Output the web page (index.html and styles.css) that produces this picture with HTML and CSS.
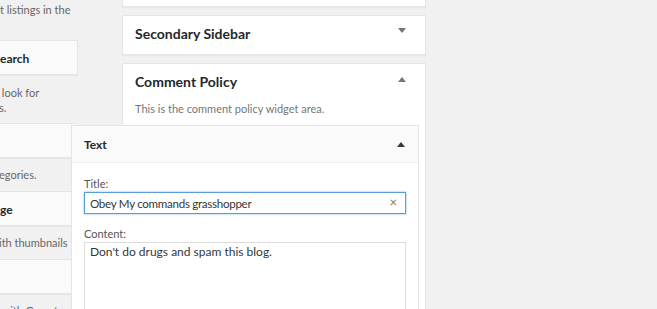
FILE: index.html
```html
<!DOCTYPE html>
<html lang="en">
<head>
  <meta charset="UTF-8">
  <meta name="viewport" content="width=device-width, initial-scale=1.0">
  <title>Widgets</title>
  <link rel="stylesheet" href="styles.css">
</head>
<body>

  <div class="screen">

    <!-- available widgets (scrolled, only the right edge shows) -->
    <div class="available">
      <div class="desc first">t listings in the</div>
      <div class="item"><span>earch</span></div>
      <div class="desc two">&nbsp;look for<br>s.</div>
      <div class="item"></div>
      <div class="desc">egories.</div>
      <div class="item"><span>ge</span></div>
      <div class="desc">ith thumbnails</div>
      <div class="item"></div>
      <div class="desc">&nbsp;with Gravatar</div>
    </div>

    <!-- sidebars -->
    <div class="sidebars">
      <div class="area above"></div>
      <div class="area">
        <div class="area-head">
          <h2>Secondary Sidebar</h2>
          <span class="arrow down"></span>
        </div>
      </div>
      <div class="area open">
        <div class="area-head">
          <h2>Comment Policy</h2>
          <span class="arrow up"></span>
        </div>
        <p class="area-desc">This is the comment policy widget area.</p>
      </div>
    </div>

    <!-- the widget being dragged -->
    <div class="widget">
      <div class="widget-top">
        <h3>Text</h3>
        <span class="arrow up dark"></span>
      </div>
      <div class="widget-inside">
        <label class="field-label" for="title">Title:</label>
        <div class="input-wrap">
          <input type="text" id="title" value="Obey My commands grasshopper">
          <span class="clear">&times;</span>
        </div>
        <label class="field-label" for="content">Content:</label>
        <textarea id="content">Don't do drugs and spam this blog.</textarea>
      </div>
    </div>

  </div>

</body>
</html>
```

FILE: styles.css
```css
html, body {
  margin: 0;
  height: 100%;
}
body {
  background: #f1f1f1;
  font-family: Lato, "Liberation Sans", sans-serif;
  color: #444;
  overflow: hidden;
}
.screen {
  position: relative;
  display: flex;
  align-items: flex-start;
  height: 100%;
}

/* left column */
.available {
  width: 79px;
  margin-left: -1px;
  flex-shrink: 0;
}
.desc {
  padding: 9px 0;
  font-size: 11px;
  line-height: 15px;
  color: #666;
  white-space: nowrap;
  overflow: hidden;
}
.desc.first {
  height: 40px;
  padding: 2px 0 0 1px;
  box-sizing: border-box;
}
.desc.two {
  height: 48px;
  padding-top: 10px;
  box-sizing: border-box;
}
.item {
  height: 35px;
  box-sizing: border-box;
  background: #fafafa;
  border: 1px solid #e5e5e5;
  box-shadow: 0 1px 1px rgba(0,0,0,0.04);
  display: flex;
  align-items: center;
  padding-top: 2px;
  font-size: 12px;
  font-weight: 700;
  color: #23282d;
  white-space: nowrap;
}

/* right column */
.sidebars {
  width: 304px;
  margin-left: 44px;
  flex-shrink: 0;
}
.area {
  background: #fff;
  border: 1px solid #e5e5e5;
  box-shadow: 0 1px 1px rgba(0,0,0,0.04);
  margin-bottom: 8px;
}
.area.above {
  height: 40px;
  margin-top: -35px;
}
.area-head {
  height: 38px;
  padding: 0 12px;
  display: flex;
  align-items: center;
  justify-content: space-between;
}
.area-head h2 {
  margin: -4px 0 0;
  font-size: 14px;
  font-weight: 700;
  color: #23282d;
}
.area.open {
  height: 400px;
}
.area-desc {
  margin: 0 12px;
  font-size: 11px;
  color: #72777c;
}

/* arrows */
.arrow {
  width: 0;
  height: 0;
  border-left: 4px solid transparent;
  border-right: 4px solid transparent;
  margin-right: 7px;
}
.arrow.down {
  border-top: 5px solid #72777c;
  margin-top: -9px;
}
.arrow.up {
  border-bottom: 5px solid #72777c;
  margin-top: -8px;
}
.arrow.up.dark {
  border-bottom-color: #32373c;
  margin: 0 13px 0 0;
}

/* dragged widget */
.widget {
  position: absolute;
  left: 71px;
  top: 125px;
  width: 348px;
  height: 300px;
  box-sizing: border-box;
  background: #fff;
  border: 1px solid #e5e5e5;
  box-shadow: 0 1px 1px rgba(0,0,0,0.04);
}
.widget-top {
  height: 36px;
  background: #fafafa;
  border-bottom: 1px solid #eee;
  display: flex;
  align-items: center;
  justify-content: space-between;
  padding-left: 12px;
}
.widget-top h3 {
  margin: 0;
  font-size: 12px;
  font-weight: 700;
  color: #23282d;
}
.widget-inside {
  padding: 14px 12px 0;
}
.field-label {
  display: block;
  font-size: 11px;
  line-height: 14px;
  color: #555;
  margin-bottom: 1px;
}
.input-wrap {
  position: relative;
  margin-bottom: 13px;
}
input, textarea {
  display: block;
  width: 322px;
  box-sizing: border-box;
  margin: 0;
  font-family: Lato, "Liberation Sans", sans-serif;
  font-size: 12px;
  color: #32373c;
  background: #fff;
}
input {
  height: 22px;
  padding: 0 20px 0 5px;
  font-size: 11.6px;
  letter-spacing: -0.3px;
  border: 1px solid #5b9dd9;
  box-shadow: 0 0 2px rgba(30,140,190,0.6);
  outline: none;
}
.clear {
  position: absolute;
  right: 9px;
  top: 3px;
  font-size: 13px;
  line-height: 14px;
  color: #777;
}
textarea {
  height: 120px;
  padding: 1px 5px;
  border: 1px solid #ddd;
  resize: none;
}
```
